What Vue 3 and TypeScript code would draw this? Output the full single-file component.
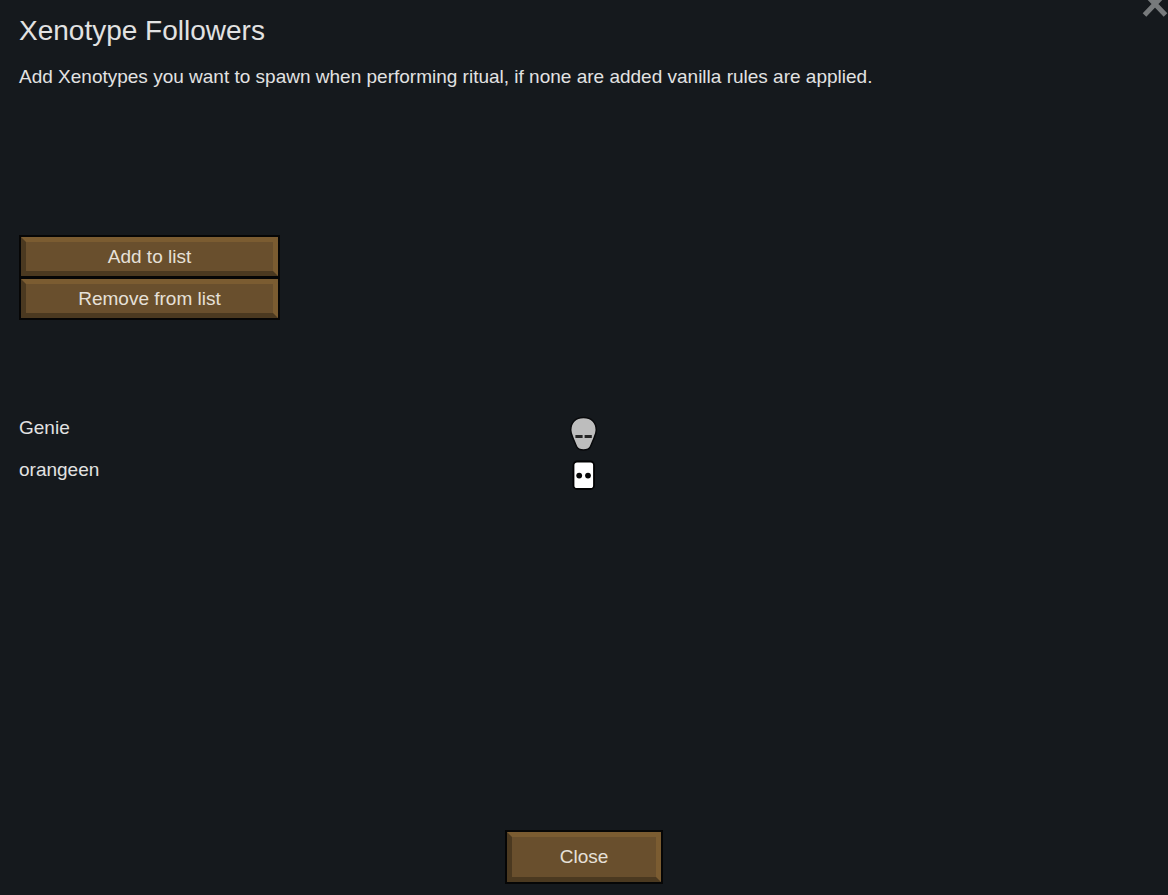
<script setup lang="ts">
import { ref } from 'vue'

interface Xenotype {
  name: string
  icon: 'genie' | 'custom'
}

const followers = ref<Xenotype[]>([
  { name: 'Genie', icon: 'genie' },
  { name: 'orangeen', icon: 'custom' },
])
</script>

<template>
  <main class="window">
    <button class="dismiss" type="button" aria-label="Dismiss">
      <svg viewBox="0 0 26 26" aria-hidden="true">
        <path d="M2.500 1L23.500 23M23.500 1L2.500 23" />
      </svg>
    </button>

    <h1>Xenotype Followers</h1>
    <p class="description">
      Add Xenotypes you want to spawn when performing ritual, if none are added vanilla rules are applied.
    </p>

    <div class="actions">
      <button class="bevel" type="button">Add to list</button>
      <button class="bevel" type="button">Remove from list</button>
    </div>

    <ul class="followers">
      <li v-for="item in followers" :key="item.name">
        <span>{{ item.name }}</span>
        <svg v-if="item.icon === 'genie'" class="icon" viewBox="0 0 42 42" aria-hidden="true">
          <path
            d="M20.500 4.500C12.500 4.500 7.700 9.500 7.700 17C7.700 21 9.600 24 11 27.500L13.500 33.500C14.600 36 16.800 37 20.500 37S26.400 36 27.500 33.500L30 27.500C31.400 24 33.300 21 33.300 17C33.300 9.500 28.500 4.500 20.500 4.500Z"
            fill="#bdbdbd" stroke="#08090b" stroke-width="1.500"
          />
          <path d="M12.400 23.500h7.200M21.600 23.500h7.200" fill="none" stroke="#252525" stroke-width="3" />
        </svg>
        <svg v-else class="icon" viewBox="0 0 42 42" aria-hidden="true">
          <rect x="10.500" y="6.500" width="20.500" height="27.500" rx="3.500" fill="#fff" stroke="#020203" stroke-width="1.800" />
          <circle cx="16.200" cy="20.600" r="2.900" fill="#080808" />
          <circle cx="25" cy="20.600" r="2.900" fill="#080808" />
        </svg>
      </li>
    </ul>

    <footer>
      <button class="bevel close" type="button">Close</button>
    </footer>
  </main>
</template>

<style>
body {
  margin: 0;
  background: #15191d;
}
</style>

<style scoped>
.window {
  position: relative;
  box-sizing: border-box;
  display: flex;
  flex-direction: column;
  min-height: 100vh;
  padding: 14px 19px 13px;
  overflow: hidden;
  background: #15191d;
  color: #e2e2e2;
  font-family: "Liberation Sans", Arial, sans-serif;
  font-size: 19px;
  line-height: 24px;
}

.dismiss {
  position: absolute;
  top: -8px;
  right: 0;
  width: 26px;
  height: 26px;
  padding: 0;
  border: 0;
  background: none;
  cursor: pointer;
}

.dismiss svg {
  display: block;
  width: 26px;
  height: 26px;
  fill: none;
  stroke: #777a7c;
  stroke-width: 5;
}

h1 {
  margin: 0;
  font-size: 28px;
  font-weight: 400;
  line-height: 34px;
}

.description {
  margin: 17px 0 0;
}

.actions {
  display: flex;
  flex-direction: column;
  gap: 3px;
  width: 257px;
  margin: 148px 2px 0;
}

.bevel {
  box-sizing: border-box;
  height: 39px;
  padding: 0;
  border: 5px solid;
  border-color: #7b5c31 #7b5c31 #4b3920 #4b3920;
  background: #694f2d;
  box-shadow: 0 0 0 2px #060606;
  color: #e6e0d8;
  font: inherit;
  cursor: pointer;
}

.followers {
  margin: 95px 0 0;
  padding: 0;
  list-style: none;
}

.followers li {
  display: grid;
  grid-template-columns: 1fr 42px 1fr;
  height: 42px;
}

.followers span {
  padding-top: 3px;
}

.icon {
  display: block;
  width: 42px;
  height: 42px;
}

footer {
  display: flex;
  justify-content: center;
  margin-top: auto;
}

.close {
  width: 154px;
  height: 50px;
}
</style>
